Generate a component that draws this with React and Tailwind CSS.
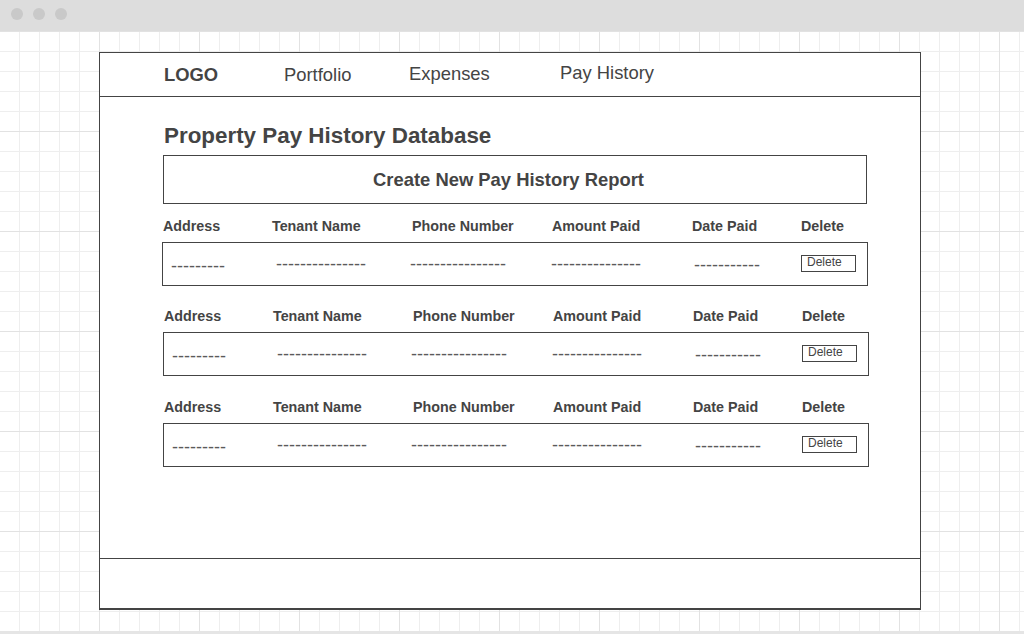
import React from "react";

const F = { fontFamily: '"Liberation Sans", Arial, sans-serif' };

function Section({ boxClass, headClass }) {
  return (
    <div>
      <div className={"grid grid-cols-[109px_140px_140px_140px_109px_1fr] h-[16px] leading-[16px] text-[14.3px] font-bold text-[#444] " + headClass}>
        <div>Address</div>
        <div>Tenant Name</div>
        <div>Phone Number</div>
        <div>Amount Paid</div>
        <div>Date Paid</div>
        <div>Delete</div>
      </div>
      <div className={"mt-[8px] h-[44px] border border-[#444] grid grid-cols-[105px_134px_141px_143px_107px_1fr] pl-[8px] items-center text-[18px] text-[#5a5a5a] antialiased " + boxClass}>
        <div className="mt-[4px]">---------</div>
        <div>---------------</div>
        <div>----------------</div>
        <div>---------------</div>
        <div className="mt-[2px]">-----------</div>
        <div>
          <div className="w-[55px] h-[17px] border border-[#444] text-[12px] leading-[12px] text-[#444] pl-[5px] mb-[2px]">Delete</div>
        </div>
      </div>
    </div>
  );
}

export default function App() {
  return (
    <div className="w-[1024px] h-[634px] overflow-hidden bg-white" style={F}>
      <div className="h-[31px] bg-[#dddddd] flex items-center gap-[10px] pl-[11px] pb-[3px]">
        <div className="w-[12px] h-[12px] rounded-full bg-[#c9c9c9]" />
        <div className="w-[12px] h-[12px] rounded-full bg-[#c9c9c9]" />
        <div className="w-[12px] h-[12px] rounded-full bg-[#c9c9c9]" />
      </div>
      <div className="h-[600px] pt-[21px] pl-[99px] bg-[linear-gradient(to_right,#e2e2e2_1px,transparent_1px),linear-gradient(to_bottom,#e2e2e2_1px,transparent_1px),linear-gradient(to_right,#eeeeee_1px,transparent_1px),linear-gradient(to_bottom,#eeeeee_1px,transparent_1px)] bg-[size:100px_100px,100px_100px,20px_20px,20px_20px] bg-[position:99px_0,0_0,19px_0,0_0]">
        <div className="w-[822px] h-[558px] bg-white border-t border-l border-r border-b-2 border-[#444] flex flex-col">
          <div className="h-[44px] border-b border-[#444] flex items-start text-[18.4px] leading-[22px] text-[#444] pl-[64px]">
            <div className="w-[120px] mt-[11px] font-bold">LOGO</div>
            <div className="w-[125px] mt-[11px]">Portfolio</div>
            <div className="w-[151px] mt-[10px]">Expenses</div>
            <div className="mt-[9px]">Pay History</div>
          </div>
          <div className="flex-1 border-b border-[#444] pl-[63px] pt-[26px]">
            <div className="text-[22.4px] leading-[26px] font-bold text-[#444] pl-[1px]">Property Pay History Database</div>
            <div className="mt-[6px] w-[704px] h-[49px] border border-[#444] flex items-center justify-center pr-[13px] text-[18.4px] font-bold text-[#444]">
              Create New Pay History Report
            </div>
            <div className="mt-[14px]">
              <Section headClass="pl-0" boxClass="-ml-[1px] w-[706px]" />
            </div>
            <div className="mt-[22px]">
              <Section headClass="pl-[1px]" boxClass="w-[706px]" />
            </div>
            <div className="mt-[23px]">
              <Section headClass="pl-[1px]" boxClass="w-[706px]" />
            </div>
          </div>
          <div className="h-[49px]" />
        </div>
      </div>
      <div className="h-[3px] bg-[#e5e5e5]" />
    </div>
  );
}
